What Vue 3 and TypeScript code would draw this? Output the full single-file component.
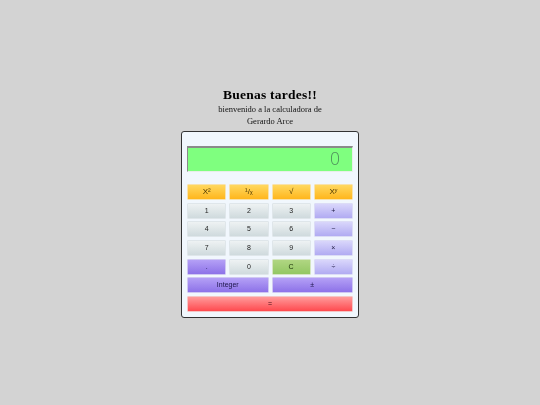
<script setup lang="ts">
interface Key { label: string; kind: string; span?: number }
const keys: Key[] = [
  { label: 'X²', kind: 'amber' }, { label: '¹/ₓ', kind: 'amber' }, { label: '√', kind: 'amber' }, { label: 'Xʸ', kind: 'amber' },
  { label: '1', kind: 'grey' }, { label: '2', kind: 'grey' }, { label: '3', kind: 'grey' }, { label: '+', kind: 'lilac' },
  { label: '4', kind: 'grey' }, { label: '5', kind: 'grey' }, { label: '6', kind: 'grey' }, { label: '−', kind: 'lilac' },
  { label: '7', kind: 'grey' }, { label: '8', kind: 'grey' }, { label: '9', kind: 'grey' }, { label: '×', kind: 'lilac' },
  { label: '.', kind: 'violet' }, { label: '0', kind: 'grey' }, { label: 'C', kind: 'green' }, { label: '÷', kind: 'lilac' },
  { label: 'Integer', kind: 'violet', span: 2 }, { label: '±', kind: 'violet', span: 2 },
  { label: '=', kind: 'red', span: 4 },
]
</script>

<template>
  <main class="page">
    <h1 class="title">Buenas tardes!!</h1>
    <p class="line">bienvenido a la calculadora de</p>
    <p class="line">Gerardo Arce</p>
    <section class="calc">
      <output class="display">0</output>
      <div class="keys">
        <button
          v-for="k in keys"
          :key="k.label"
          type="button"
          class="key"
          :class="[k.kind, k.span ? 'span' + k.span : '']"
        >{{ k.label }}</button>
      </div>
    </section>
  </main>
</template>

<style>
html, body { margin: 0; background: #d3d3d3; }
</style>

<style scoped>
.page {
  width: 540px;
  height: 405px;
  box-sizing: border-box;
  padding-top: 87px;
  display: flex;
  flex-direction: column;
  align-items: center;
  background: #d3d3d3;
  font-family: "Liberation Serif", serif;
  color: #111;
  filter: blur(0.3px);
}
.title {
  margin: 0;
  font-size: 13.5px;
  line-height: 16px;
  font-weight: 700;
  letter-spacing: 0.25px;
  color: #000;
}
.line {
  margin: 0;
  font-size: 8.5px;
  line-height: 12px;
  height: 12px;
  color: #111;
}
.line + .line { margin-bottom: 4px; }
.calc {
  width: 178px;
  height: 187px;
  box-sizing: border-box;
  padding: 14px 5px 0 5px;
  background: #f1f7fd;
  border: 1px solid #333;
  border-radius: 3px;
}
.display {
  display: block;
  height: 26px;
  box-sizing: border-box;
  padding-right: 12px;
  background: #7fff7f;
  border-top: 2px solid #8a8a8a;
  border-left: 1px solid #8a8a8a;
  border-right: 1px solid #e8efe8;
  border-bottom: 1px solid #e8efe8;
  text-align: right;
  font-family: "Open Sans", "Liberation Sans", sans-serif;
  font-weight: 300;
  font-size: 17.5px;
  line-height: 21px;
  color: #4f8f5c;
}
.keys {
  margin-top: 12px;
  display: grid;
  grid-template-columns: repeat(4, 1fr);
  grid-auto-rows: 16px;
  column-gap: 3px;
  row-gap: 2.7px;
}
.key {
  margin: 0;
  padding: 0;
  border: 1px solid #e6ecf2;
  border-radius: 1px;
  font-family: "Liberation Sans", sans-serif;
  font-size: 7px;
  line-height: 14px;
  color: #222;
}
.span2 { grid-column: span 2; }
.span4 { grid-column: span 4; }
.amber { background: linear-gradient(#ffd860, #ffb61c); border-color: #f8e2ac; color: #4a3600; font-size: 8px; }
.grey { background: linear-gradient(#eef2f3, #cfdadd); border-color: #dfe6ea; }
.lilac { background: linear-gradient(#d9d6fb, #b1abf2); border-color: #dcdcf6; color: #1c1840; }
.violet { background: linear-gradient(#b4a0f6, #8d72e8); border-color: #cfc7f2; color: #1c1548; }
.green { background: linear-gradient(#b0d682, #93c763); border-color: #d5e5c2; color: #172c06; }
.red { background: linear-gradient(#ff9a9a, #ff4a4f); border-color: #f5c5c5; color: #3a0c10; }
</style>
